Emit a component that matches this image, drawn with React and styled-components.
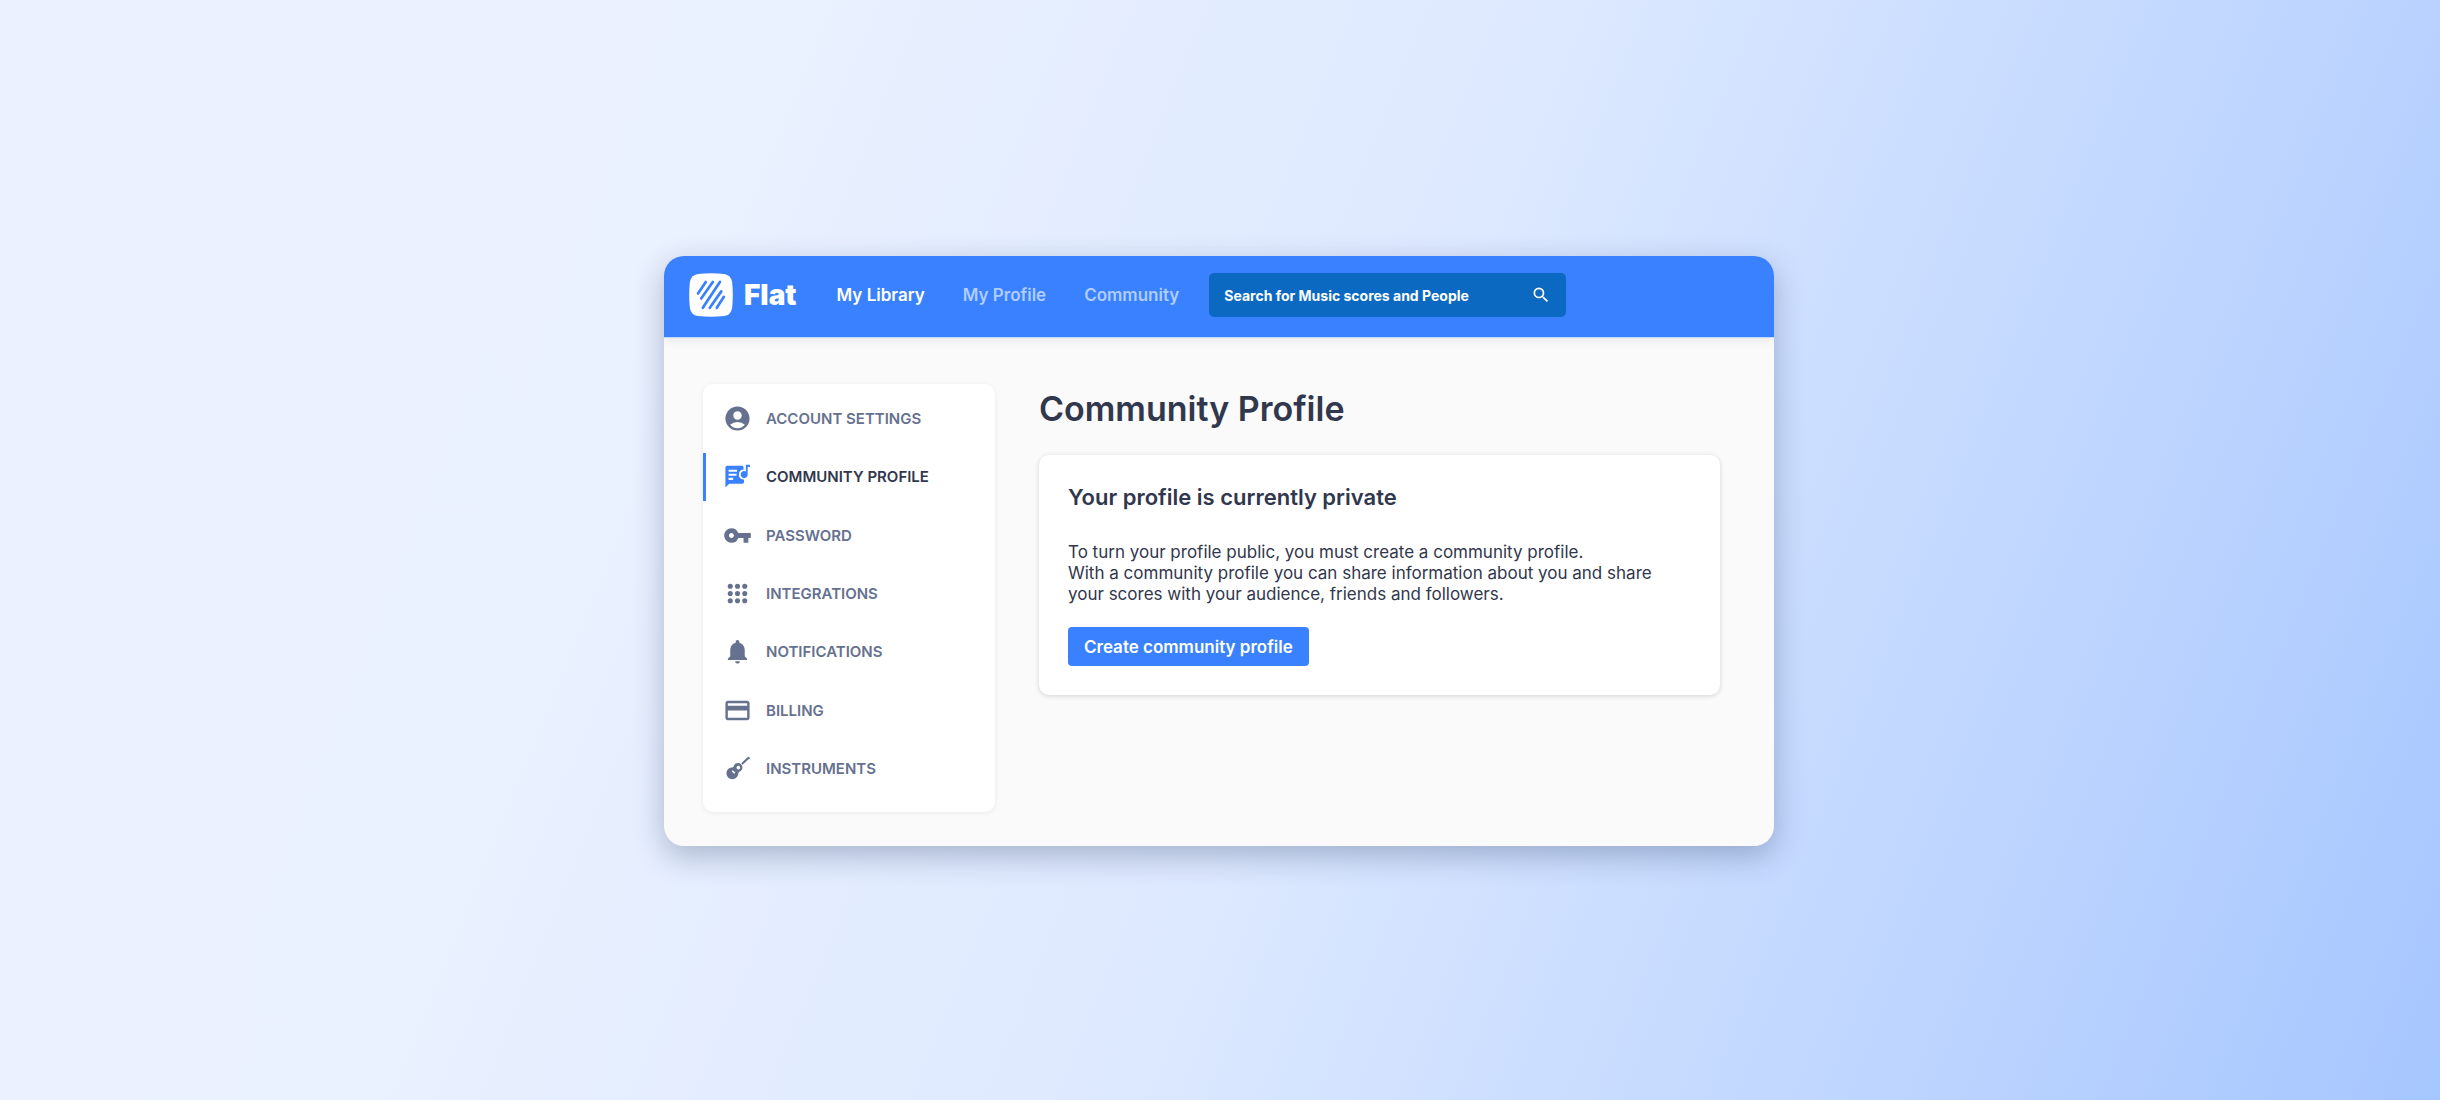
import React from 'react'
import styled, { createGlobalStyle } from 'styled-components'
import {
  MdAccountCircle,
  MdVpnKey,
  MdNotifications,
  MdOutlineCreditCard,
  MdSearch,
} from 'react-icons/md'


const GlobalStyle = createGlobalStyle`
  * {
    box-sizing: border-box;
  }

  body {
    margin: 0;
    font-family: Inter, 'Liberation Sans', sans-serif;
    color: #31374d;
  }
`

const Page = styled.div`
  display: flex;
  align-items: center;
  justify-content: center;
  min-height: 100vh;
  padding: 34px 34px 32px 32px;
  background: linear-gradient(112deg, #ebf1ff 0%, #eaf1ff 27%, #dde9ff 54%, #a6c6ff 100%);
`

const Window = styled.div`
  width: 100%;
  max-width: 1110px;
  overflow: hidden;
  border-radius: 20px;
  background: #fafafa;
  box-shadow: 0 10px 30px rgba(30, 50, 90, 0.3);
`

const TopBar = styled.header`
  display: flex;
  align-items: center;
  padding: 17px 25px 20px;
  background: #3981ff;
  border-bottom: 1px solid #c3d9fb;
  box-shadow: 0 2px 10px rgba(0, 0, 0, 0.08);
`

const Brand = styled.a`
  display: flex;
  align-items: center;
  gap: 11px;
  margin-right: 40px;
  font-size: 28px;
  font-weight: 900;
  line-height: 32px;
  color: #fff;
  text-decoration: none;
`

const Nav = styled.nav`
  display: flex;
  gap: 38px;
`

const NavLink = styled.a`
  font-size: 17px;
  font-weight: 600;
  color: ${props => props.$active ? '#fff' : '#b0cdff'};
  text-decoration: none;
`

const Search = styled.form`
  display: flex;
  align-items: center;
  flex: 0 1 357px;
  height: 44px;
  margin-left: 30px;
  padding: 0 15px;
  border-radius: 5px;
  background: #0b69c2;
`

const SearchInput = styled.input`
  flex: 1;
  min-width: 0;
  padding: 0;
  border: 0;
  outline: 0;
  background: transparent;
  font: 700 14px Inter, 'Liberation Sans', sans-serif;
  color: #fff;

  &::placeholder {
    color: #fff;
    opacity: 1;
  }
`

const SearchButton = styled.button`
  display: flex;
  padding: 0;
  border: 0;
  background: transparent;
  color: #fff;
`

const Content = styled.div`
  display: flex;
  align-items: flex-start;
  gap: 44px;
  padding: 46px 54px 34px 39px;
`

const Sidebar = styled.nav`
  flex: 0 0 292px;
  padding: 5px 0 14px;
  border-radius: 10px;
  background: #fff;
  box-shadow: 0 1px 5px rgba(0, 0, 0, 0.07);
`

const Menu = styled.ul`
  display: grid;
  grid-auto-rows: 1fr;
  align-items: center;
  min-height: 409px;
  margin: 0;
  padding: 0;
  list-style: none;
`

const MenuLink = styled.a`
  display: flex;
  align-items: center;
  gap: 14px;
  height: 48px;
  padding-left: 17px;
  border-left: 3px solid ${props => props.$active ? '#3981ff' : 'transparent'};
  font-size: 15px;
  font-weight: 600;
  color: ${props => props.$active ? '#31374d' : '#66718f'};
  text-decoration: none;
  text-transform: uppercase;

  svg {
    width: 29px;
    height: 29px;
    color: ${props => props.$active ? '#3981ff' : '#66718f'};
  }
`

const Main = styled.main`
  flex: 1;
  min-width: 0;
`

const Title = styled.h1`
  margin: 4px 0 25px;
  font-size: 34px;
  font-weight: 600;
  line-height: 42px;
`

const Panel = styled.section`
  padding: 28px 29px 29px;
  border-radius: 10px;
  background: #fff;
  box-shadow: 0 1px 5px rgba(0, 0, 0, 0.16);
`

const PanelTitle = styled.h2`
  margin: 0 0 31px;
  font-size: 22px;
  font-weight: 600;
  line-height: 28px;
`

const PanelText = styled.p`
  margin: 0 0 22px;
  font-size: 17px;
  line-height: 21px;
`

const Button = styled.button`
  display: block;
  height: 39px;
  padding: 0 16px;
  border: 0;
  border-radius: 4px;
  background: #3981ff;
  font: 600 17px Inter, 'Liberation Sans', sans-serif;
  color: #fff;
`


const Logo = () => (
  <svg width="44" height="44" viewBox="0 0 44 44" aria-hidden="true">
    <path
      d="M9 .9Q22-.5 35 .9Q42 2 43.100 9Q44.500 22 43.100 35Q42 42 35 43.100Q22 44.500 9 43.100Q2 42 .9 35Q-.5 22 .9 9Q2 2 9 .9Z"
      fill="#fff"
    />
    <path
      d="M9 20.500L16.800 9M12.200 25.500L23.800 9M13.800 34.800L30.900 9M20.800 34.800L32.300 18.400M27.800 34.800L34.900 23.800"
      fill="none"
      stroke="#3981ff"
      strokeWidth="2.700"
      strokeLinecap="round"
    />
  </svg>
)

const CommunityIcon = () => (
  <svg viewBox="0 0 24 24" fill="currentColor" aria-hidden="true">
    <path
      fillRule="evenodd"
      d="M3.500 3.200H15.800Q17 3.200 17 4.400V6.300A4.100 4.100 0 0 0 16.400 14.400L17.400 14.500V16.600Q17.400 18 16 18H5.200L2 21.200V4.700Q2 3.200 3.500 3.200ZM4.600 6.500V8H11.600V6.500ZM4.600 9.800V11.300H11.200V9.800ZM4.600 13.100V14.900H8.400V13.100Z"
    />
    <path d="M18.900 2.200H22.300V4.200H20.400V10.500A2.900 2.900 0 1 1 18.900 7.900Z" />
  </svg>
)

const AppsIcon = () => (
  <svg viewBox="0 0 24 24" fill="currentColor" aria-hidden="true">
    {[6, 12, 18].map(y => [6, 12, 18].map(x => (
      <circle key={`${x}-${y}`} cx={x} cy={y} r="2.100" />
    )))}
  </svg>
)

const GuitarIcon = () => (
  <svg viewBox="0 0 24 24" fill="currentColor" aria-hidden="true">
    <path
      fillRule="evenodd"
      d="M8.900 10.200C9.400 8.400 10.700 7.500 12.300 7.500C14.500 7.500 16.100 9.100 16.100 11.200C16.100 12.900 15.200 14.100 13.600 14.600C12.900 14.900 12.800 15.400 12.700 16.200C12.400 18.900 10.400 20.800 7.800 20.800C4.900 20.800 2.900 18.700 2.900 15.900C2.900 13.200 4.800 11.300 7.500 11.100C8.300 11 8.700 10.800 8.900 10.200ZM12.700 9.800A1.500 1.500 0 1 0 12.710 9.800ZM7.200 14.300L9.300 16.400L10.200 15.500L8.100 13.400Z"
    />
    <path d="M15.700 8.300L20.300 3.900L22 3" fill="none" stroke="currentColor" strokeWidth="1.700" />
  </svg>
)

const menu = [
  { label: 'Account settings', icon: MdAccountCircle },
  { label: 'Community profile', icon: CommunityIcon, active: true },
  { label: 'Password', icon: MdVpnKey },
  { label: 'Integrations', icon: AppsIcon },
  { label: 'Notifications', icon: MdNotifications },
  { label: 'Billing', icon: MdOutlineCreditCard },
  { label: 'Instruments', icon: GuitarIcon },
]

const App = () => (
  <Page>
    <GlobalStyle />
    <Window>
      <TopBar>
        <Brand href="#">
          <Logo />
          Flat
        </Brand>
        <Nav>
          <NavLink href="#" $active>My Library</NavLink>
          <NavLink href="#">My Profile</NavLink>
          <NavLink href="#">Community</NavLink>
        </Nav>
        <Search onSubmit={e => e.preventDefault()}>
          <SearchInput
            type="text"
            aria-label="Search"
            placeholder="Search for Music scores and People"
          />
          <SearchButton type="submit" aria-label="Submit search">
            <MdSearch size={20} />
          </SearchButton>
        </Search>
      </TopBar>

      <Content>
        <Sidebar>
          <Menu>
            {menu.map(({ label, icon: Icon, active }) => (
              <li key={label}>
                <MenuLink href="#" $active={active}>
                  <Icon />
                  {label}
                </MenuLink>
              </li>
            ))}
          </Menu>
        </Sidebar>

        <Main>
          <Title>Community Profile</Title>
          <Panel>
            <PanelTitle>Your profile is currently private</PanelTitle>
            <PanelText>
              To turn your profile public, you must create a community profile.
              <br />
              With a community profile you can share information about you and share
              your scores with your audience, friends and followers.
            </PanelText>
            <Button type="button">Create community profile</Button>
          </Panel>
        </Main>
      </Content>
    </Window>
  </Page>
)

export default App
